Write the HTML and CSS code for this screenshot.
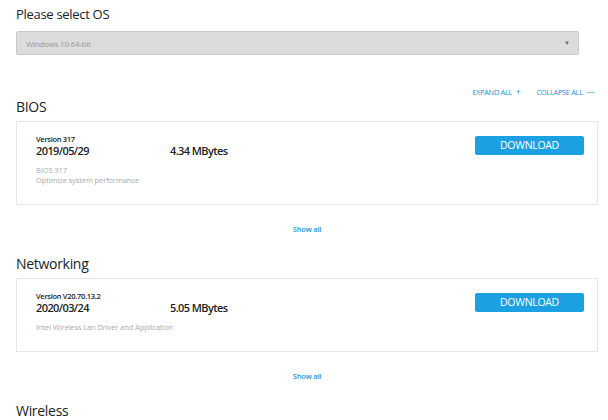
FILE: index.html
```html
<!DOCTYPE html>
<html>
<head>
<meta charset="utf-8">
<link rel="stylesheet" href="styles.css">
</head>
<body>
<div class="page">
  <div class="os-label">Please select OS</div>
  <div class="select">
    <span class="select-text">Windows 10 64-bit</span>
    <span class="select-arrow">&#9660;</span>
  </div>
  <div class="controls">
    <span class="ctrl">EXPAND ALL <span class="sym">+</span></span>
    <span class="ctrl">COLLAPSE ALL <span class="sym">&mdash;</span></span>
  </div>

  <h2 class="section first">BIOS</h2>
  <div class="card">
    <div class="info">
      <div class="version">Version 317</div>
      <div class="row">
        <span class="date">2019/05/29</span>
        <span class="size">4.34 MBytes</span>
      </div>
      <div class="desc">BIOS 317<br>Optimize system performance</div>
    </div>
    <div class="btn">DOWNLOAD</div>
  </div>
  <div class="showall">Show all</div>

  <h2 class="section">Networking</h2>
  <div class="card">
    <div class="info">
      <div class="version">Version V20.70.13.2</div>
      <div class="row">
        <span class="date">2020/03/24</span>
        <span class="size">5.05 MBytes</span>
      </div>
      <div class="desc">Intel Wireless Lan Driver and Application</div>
    </div>
    <div class="btn">DOWNLOAD</div>
  </div>
  <div class="showall">Show all</div>

  <h2 class="section">Wireless</h2>
</div>
</body>
</html>
```

FILE: styles.css
```css
html, body {
  margin: 0;
  padding: 0;
  background: #ffffff;
  overflow: hidden;
}
body {
  font-family: "Open Sans", "Noto Sans", sans-serif;
  color: #222;
}
.page {
  padding: 6px 10px 0 16px;
}
.os-label {
  font-size: 13px;
  line-height: 16px;
  letter-spacing: -0.3px;
  color: #222;
}
.select {
  margin-top: 9px;
  width: 563px;
  height: 24px;
  box-sizing: border-box;
  background: #dcdcdc;
  border: 1px solid #c9c9c9;
  border-radius: 2px;
  display: flex;
  align-items: center;
  justify-content: space-between;
  padding: 0 8px 0 9px;
}
.select-text {
  font-size: 8px;
  color: #9a9a9a;
  letter-spacing: -0.25px;
}
.select-arrow {
  font-size: 6px;
  color: #666;
}
.controls {
  margin-top: 32px;
  display: flex;
  justify-content: flex-end;
  gap: 16px;
  padding-right: 3px;
  line-height: 10px;
}
.ctrl {
  font-size: 7.5px;
  color: #1b95d4;
  letter-spacing: -0.35px;
}
.sym {
  font-size: 9px;
  margin-left: 2px;
}
.section {
  margin: 0;
  font-weight: 400;
  font-size: 14px;
  line-height: 16px;
  letter-spacing: -0.3px;
  color: #222;
}
.section.first {
  margin-top: 2px;
}
.showall + .section {
  margin-top: 22px;
}
.card {
  margin-top: 6px;
  border: 1px solid #e6e6e6;
  display: flex;
  justify-content: space-between;
  align-items: flex-start;
  padding: 12px 13px 19px 19px;
}
.version {
  font-size: 7.5px;
  line-height: 10px;
  font-weight: 600;
  letter-spacing: -0.3px;
}
.row {
  display: flex;
  line-height: 14px;
  font-size: 11px;
  font-weight: 600;
  letter-spacing: -0.6px;
}
.date {
  width: 134px;
}
.desc {
  margin-top: 7px;
  font-size: 7.5px;
  line-height: 10px;
  color: #aaaaaa;
  letter-spacing: -0.1px;
}
.btn {
  margin-top: 2px;
  width: 109px;
  height: 19px;
  background: #1ba1e2;
  border-radius: 2px;
  color: #fff;
  font-size: 10.5px;
  line-height: 19px;
  text-align: center;
  letter-spacing: -0.3px;
}
.showall {
  margin-top: 19px;
  text-align: center;
  font-size: 7.5px;
  line-height: 10px;
  font-weight: 600;
  color: #1b95d4;
  letter-spacing: -0.2px;
}
```
